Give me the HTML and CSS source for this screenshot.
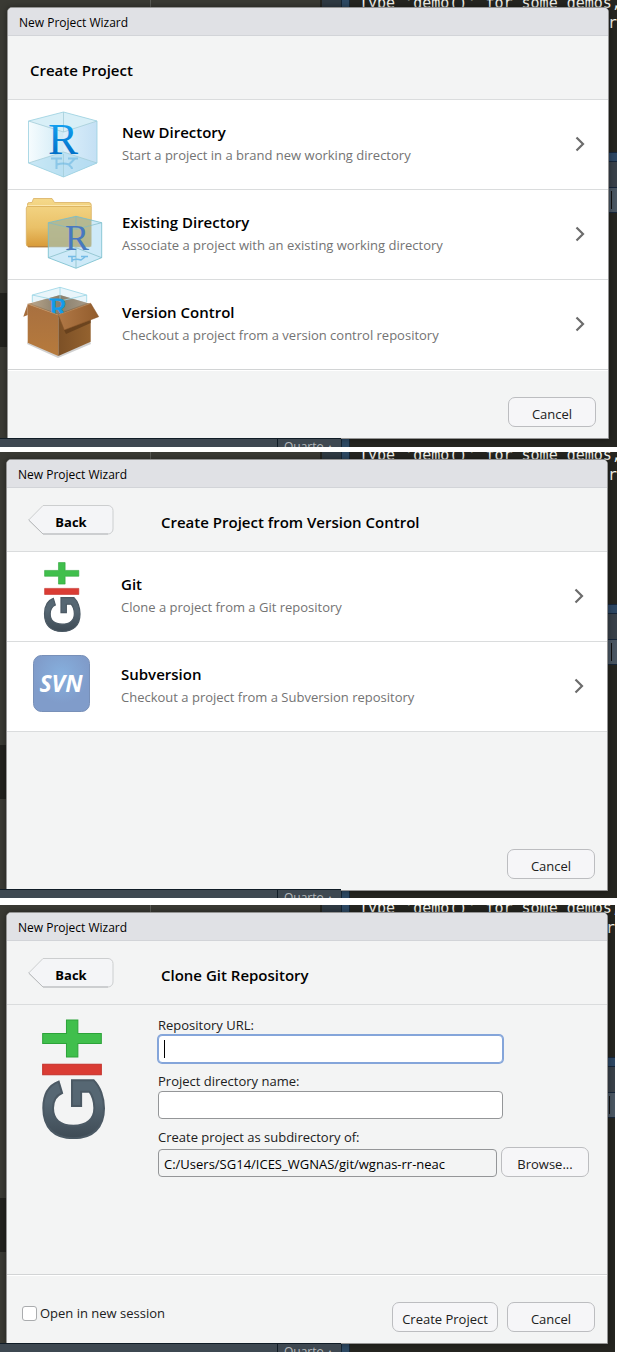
FILE: index.html
```html
<!DOCTYPE html>
<html lang="en">
<head>
<meta charset="utf-8">
<title>New Project Wizard</title>
<link rel="stylesheet" href="styles.css">
</head>
<body>
<svg class="defs" aria-hidden="true">
  <defs>
    <linearGradient id="glass" x1="0" x2="1" y1="0" y2="1">
      <stop offset="0" stop-color="#eef8fc"/><stop offset="1" stop-color="#b4dcf2"/>
    </linearGradient>
    <linearGradient id="glassLeft" x1="0" x2="1"><stop offset="0" stop-color="#f6fcfe"/><stop offset="1" stop-color="#cfeaf5"/></linearGradient>
    <linearGradient id="glassRight" x1="0" x2="1"><stop offset="0" stop-color="#dceffa"/><stop offset="1" stop-color="#c4e0f4"/></linearGradient>
    <linearGradient id="blue" x1="0" x2="0" y1="0" y2="1"><stop offset="0.2" stop-color="#14a0f0"/><stop offset="0.8" stop-color="#0070c8"/></linearGradient>
    <linearGradient id="folder" x1="0" x2="0" y1="0" y2="1"><stop offset="0" stop-color="#f5d98a"/><stop offset="0.6" stop-color="#eac168"/><stop offset="1" stop-color="#d89a38"/></linearGradient>
    <linearGradient id="cardLeft" x1="0" x2="0" y1="0" y2="1"><stop offset="0" stop-color="#a87040"/><stop offset="1" stop-color="#b67a3c"/></linearGradient>
    <linearGradient id="cardRight" x1="0" x2="1"><stop offset="0" stop-color="#7c5026"/><stop offset="1" stop-color="#94622f"/></linearGradient>
    <linearGradient id="cardFlap" x1="0" x2="1"><stop offset="0" stop-color="#b07846"/><stop offset="1" stop-color="#925c2c"/></linearGradient>
    <linearGradient id="cardInside" x1="0" x2="1"><stop offset="0" stop-color="#b89874"/><stop offset="0.5" stop-color="#75654c"/><stop offset="1" stop-color="#a08a70"/></linearGradient>
    <linearGradient id="slate" gradientUnits="userSpaceOnUse" x1="0" x2="170" y1="0" y2="0"><stop offset="0" stop-color="#3c4852"/><stop offset="0.7" stop-color="#566773"/></linearGradient>
    <radialGradient id="svnFill" cx="0.5" cy="0.35" r="0.5"><stop offset="0" stop-color="#86b0de"/><stop offset="1" stop-color="#809cca"/></radialGradient>
    <symbol id="chevron" viewBox="0 0 10 16"><path d="M1.500 1.500 8 8l-6.500 6.500" fill="none" stroke="#6c6c6c" stroke-width="2.200"/></symbol>
    <symbol id="arrowShape" viewBox="0 0 86 30">
      <path d="M15 .5H80a5 5 0 0 1 5 5V24a5 5 0 0 1-5 5H15L.7 15Z" fill="#f4f5f7" stroke="#cccecf"/>
      <path d="M.7 15 15 29H80" fill="none" stroke="#b9bbbd"/>
    </symbol>
    <symbol id="git" viewBox="120 58 194 358">
      <path d="M199 61h34v40h70v30h-70v40h-34v-40h-71v-30h71Z" fill="#40bf4c" stroke="#2ca339" stroke-width="3"/>
      <path d="M128 193h175v31H128Z" fill="#da3c34" stroke="#c32f28" stroke-width="3"/>
      <text class="git-letter" transform="translate(307 424) rotate(-90)">G</text>
    </symbol>
  </defs>
</svg>

<main class="page">
  <section class="screen screen-first">
    <div class="ide" aria-hidden="true">
      <div class="ide-left"><div class="ide-guide"></div><div class="ide-mark"></div><div class="ide-tabs"><span class="ide-tab">Quarto &#9652;</span></div></div>
      <div class="ide-gutter"></div>
      <div class="ide-split"></div>
      <div class="ide-console"><div class="ide-code">Type 'demo()' for some demos,</div><div class="ide-code ide-code-end">or</div>
        <div class="ide-dock"><div class="ide-dock-bar"></div><div class="ide-dock-tabs"></div><div class="ide-dock-tools"></div></div></div>
    </div>
    <div class="dialog">
      <div class="titlebar">New Project Wizard</div>
      <header class="header"><h2 class="heading">Create Project</h2></header>
      <div class="choices">
        <button class="choice" type="button">
          <svg class="choice-icon" viewBox="0 0 88 88" aria-hidden="true">
            <path d="M8.500 21 43.500 12 77 21V63L43.500 77 8.500 63Z" fill="url(#glass)"/>
            <path d="M8.500 21 43.500 32V77L8.500 63Z" fill="url(#glassLeft)"/>
            <path d="M77 21 43.500 32V77L77 63Z" fill="url(#glassRight)"/>
            <path d="M8.500 63 43.500 52 77 63 43.500 77Z" fill="#a5d7ee" opacity=".55"/>
            <path d="M8.500 21 43.500 12 77 21 43.500 32Z" fill="#d8eff7"/>
            <path d="M8.500 21 43.500 32 77 21M43.500 12V32M8.500 63 43.500 52 77 63M43.500 54V77" fill="none" stroke="#a5cdd8" stroke-width=".8"/>
            <path d="M8.500 21 43.500 12 77 21V63L43.500 77 8.500 63Z" fill="none" stroke="#9bd0e0" stroke-width=".8"/>
            <path d="M31 58.500h11M48 58.500h10M36.500 59v10M37 64.500q6-2 12 0l6-6M49 65q3 2 3 4" fill="none" stroke="#5aaede" stroke-width="2" opacity=".5"/>
            <text class="r-letter r-large" x="28" y="54">R</text>
          </svg>
          <span class="choice-text"><strong class="choice-title">New Directory</strong><span class="choice-note">Start a project in a brand new working directory</span></span>
          <svg class="chevron" aria-hidden="true"><use href="#chevron"/></svg>
        </button>
        <button class="choice" type="button">
          <svg class="choice-icon" viewBox="0 0 88 88" aria-hidden="true">
            <path d="M7.500 16V14q0-1.500 2-1.500h2.500l1.500-4h18.500l2.500 4H69q2.300 0 2.300 3V54q0 2.700-2.500 2.700H9Q6.300 56.700 6.300 54V18Z" fill="url(#folder)" stroke="#d9b062" stroke-width=".8"/>
            <path d="M7 17Q7 15.500 9 15.500H69.500Q71 15.500 71 17" fill="none" stroke="#fbe7ae"/>
            <path d="M7 16.500H71" stroke="#d6a954" stroke-width=".7"/>
            <path d="M8 56.800H70" stroke="#a87030"/>
            <path d="M28.300 32.700 56 26.300 81.700 32.700V67.700L56 78.300 28.300 67.700Z" fill="#bde3f6" opacity=".75"/>
            <path d="M28.300 32.700 56 26.300 71.300 30V56.700H28.300Z" fill="#a8a266" opacity=".6"/>
            <path d="M28.300 32.700 56 39.300 81.700 32.700M56 26.300V39.300M28.300 67.700 56 57.700 81.700 67.700M56 58V78" fill="none" stroke="#7fbac4" stroke-width=".7"/>
            <path d="M28.300 32.700 56 26.300 81.700 32.700V67.700L56 78.300 28.300 67.700Z" fill="none" stroke="#74bccb" stroke-width=".8"/>
            <text class="r-letter r-medium" x="45" y="60">R</text>
            <path d="M48 66.500h8M61 66.500h7M52 67v5M52 70q5-1.500 9 0l4-3" fill="none" stroke="#76bce6" stroke-width="1.500"/>
          </svg>
          <span class="choice-text"><strong class="choice-title">Existing Directory</strong><span class="choice-note">Associate a project with an existing working directory</span></span>
          <svg class="chevron" aria-hidden="true"><use href="#chevron"/></svg>
        </button>
        <button class="choice" type="button">
          <svg class="choice-icon" viewBox="0 0 88 88" aria-hidden="true">
            <path d="M7 64 38 78 71 64 70 61 38 74 8 61Z" fill="#777" opacity=".35"/>
            <path d="M7.700 24 3.300 36.700 7.700 35Z" fill="#a66d3c"/>
            <path d="M7.700 24 40 15 70.700 24 38.300 35Z" fill="url(#cardInside)"/>
            <path d="M12.300 15 40 7.300 66.700 15V23L38.300 34 12.300 24Z" fill="#d7edf6" opacity=".55"/>
            <path d="M7.700 24 40 15 70.700 24 38.300 35Z" fill="url(#cardInside)" opacity=".65"/>
            <path d="M12.300 22V15L40 7.300 66.700 15V22M12.300 15 40 21 66.700 15M40 7.300V20" fill="none" stroke="#98d4e4" stroke-width=".8"/>
            <text class="r-letter r-small" x="29" y="37">R</text>
            <path d="M7.700 24 38.300 35V76L7.700 62.700Z" fill="url(#cardLeft)"/>
            <path d="M38.300 35 70.700 24V61.700L38.300 76Z" fill="url(#cardRight)"/>
            <path d="M44 50 70.700 40V43L46 54Z" fill="#5d3918" opacity=".7"/>
            <path d="M38.300 35 70.700 23.300 78.700 36.700 44.300 50Z" fill="url(#cardFlap)" stroke="#845328" stroke-width=".5"/>
            <path d="M7.700 24 38.300 35 70.700 23.300" fill="none" stroke="#c69565" stroke-width=".7"/>
          </svg>
          <span class="choice-text"><strong class="choice-title">Version Control</strong><span class="choice-note">Checkout a project from a version control repository</span></span>
          <svg class="chevron" aria-hidden="true"><use href="#chevron"/></svg>
        </button>
      </div>
      <footer class="footer footer-ruled"><button class="btn" type="button">Cancel</button></footer>
    </div>
  </section>

  <section class="screen screen-second">
    <div class="ide" aria-hidden="true">
      <div class="ide-left"><div class="ide-guide"></div><div class="ide-mark"></div><div class="ide-tabs"><span class="ide-tab">Quarto &#9652;</span></div></div>
      <div class="ide-gutter"></div>
      <div class="ide-split"></div>
      <div class="ide-console"><div class="ide-code">Type 'demo()' for some demos,</div><div class="ide-code ide-code-end">or</div>
        <div class="ide-dock"><div class="ide-dock-bar"></div><div class="ide-dock-tabs"></div><div class="ide-dock-tools"></div></div></div>
    </div>
    <div class="dialog">
      <div class="titlebar">New Project Wizard</div>
      <header class="header header-back">
        <button class="back" type="button"><svg class="back-shape" aria-hidden="true"><use href="#arrowShape"/></svg><span class="back-label">Back</span></button>
        <h2 class="heading">Create Project from Version Control</h2>
      </header>
      <div class="choices choices-ruled">
        <button class="choice" type="button">
          <svg class="choice-icon" viewBox="0 0 88 88" aria-hidden="true"><use href="#git" x="24" y="10" width="38" height="70"/></svg>
          <span class="choice-text"><strong class="choice-title">Git</strong><span class="choice-note">Clone a project from a Git repository</span></span>
          <svg class="chevron" aria-hidden="true"><use href="#chevron"/></svg>
        </button>
        <button class="choice" type="button">
          <svg class="choice-icon" viewBox="0 0 88 88" aria-hidden="true">
            <rect x="14.500" y="13.500" width="56" height="56" rx="8" fill="url(#svnFill)" stroke="#7890b8"/>
            <text class="svn-letters" x="42" y="50">SVN</text>
          </svg>
          <span class="choice-text"><strong class="choice-title">Subversion</strong><span class="choice-note">Checkout a project from a Subversion repository</span></span>
          <svg class="chevron" aria-hidden="true"><use href="#chevron"/></svg>
        </button>
      </div>
      <footer class="footer footer-tall"><button class="btn" type="button">Cancel</button></footer>
    </div>
  </section>

  <section class="screen screen-third">
    <div class="ide" aria-hidden="true">
      <div class="ide-left"><div class="ide-guide"></div><div class="ide-mark"></div><div class="ide-tabs"><span class="ide-tab">Quarto &#9652;</span></div></div>
      <div class="ide-gutter"></div>
      <div class="ide-split"></div>
      <div class="ide-console"><div class="ide-code">Type 'demo()' for some demos,</div><div class="ide-code ide-code-end">or</div>
        <div class="ide-dock"><div class="ide-dock-bar"></div><div class="ide-dock-tabs"></div><div class="ide-dock-tools"></div></div></div>
    </div>
    <form class="dialog">
      <div class="titlebar">New Project Wizard</div>
      <header class="header header-back">
        <button class="back" type="button"><svg class="back-shape" aria-hidden="true"><use href="#arrowShape"/></svg><span class="back-label">Back</span></button>
        <h2 class="heading">Clone Git Repository</h2>
      </header>
      <div class="details">
        <svg class="git-large" aria-hidden="true"><use href="#git"/></svg>
        <div class="fields">
          <div class="field"><label class="label" for="url">Repository URL:</label><input class="input" id="url" type="text" autofocus></div>
          <div class="field"><label class="label" for="name">Project directory name:</label><input class="input" id="name" type="text"></div>
          <div class="field"><label class="label" for="parent">Create project as subdirectory of:</label>
            <div class="picker"><input class="input input-path" id="parent" type="text" readonly value="C:/Users/SG14/ICES_WGNAS/git/wgnas-rr-neac"><button class="btn" type="button">Browse...</button></div></div>
        </div>
      </div>
      <footer class="footer footer-ruled">
        <label class="check"><input class="checkbox" type="checkbox">Open in new session</label>
        <button class="btn btn-wide" type="submit">Create Project</button>
        <button class="btn" type="button">Cancel</button>
      </footer>
    </form>
  </section>
</main>
</body>
</html>
```
FILE: styles.css
```css
* { box-sizing: border-box; }
body { margin: 0; background: #fff; color: #000; font: 13px/18px "Open Sans", "Noto Sans", sans-serif; }
button, input { font: inherit; color: inherit; }
.defs { position: absolute; width: 0; height: 0; }
.page { padding: 0 5px 4px 0; }

.screen { position: relative; overflow: hidden; }
.screen-first { padding: 7px 8px 8px 7px; }
.screen-second { padding: 7px 9px 7px 6px; margin-top: 5px; }
.screen-third { padding: 7px 7px 8px 6px; margin: 7px 2px 0 0; }

/* Editor window that shows round the edges of each dialog */
.ide { position: absolute; inset: 0; display: flex; background: #252520; overflow: hidden; }
.ide-left { position: relative; flex: none; width: 322px; background: #3a3a34; border-right: 2px solid #252520; }
.ide-guide { width: 151px; height: 12px; border-right: 1px solid #5a5b56; }
.ide-mark { position: absolute; top: 293px; left: 0; width: 12px; height: 54px; background: #22221e; }
.ide-tabs { position: absolute; bottom: 0; left: 0; width: 341px; height: 9px; background: #3e4851; border-top: 1px solid #101c26; padding-left: 277px; overflow: hidden; z-index: 1; }
.ide-tab { display: block; border-left: 1px solid #101c26; padding-left: 6px; color: #b4b8bb; font-size: 12px; line-height: 16px; }
.ide-gutter { flex: none; width: 19px; background: #2f3a43; }
.ide-split { flex: none; width: 9px; background: #2d4963; border: solid #152635; border-width: 0 1px; }
.ide-console { position: relative; flex: 1; min-width: 0; padding-left: 9px; margin-top: -7px; color: #f4f4ee; }
.ide-code { font: 15px/20px "DejaVu Sans Mono", monospace; white-space: pre; }
.ide-code-end { text-align: right; }
.ide-dock { position: absolute; top: 159px; right: 0; width: 12px; }
.ide-dock-bar { height: 10px; background: #2d4763; border: solid #16263a; border-width: 1px 0; }
.ide-dock-tabs { height: 26px; background: #394149; border-bottom: 1px solid #16263a; }
.ide-dock-tools { height: 25px; padding-top: 3px; background: #4a5662; border-bottom: 1px solid #16263a; }
.ide-dock-tools::before { content: ""; display: block; width: 1px; height: 18px; margin-left: 6px; background: #111; }

.dialog { position: relative; display: flex; flex-direction: column; background: #f3f4f4; border: 1px solid #949494; border-radius: 5px 5px 0 0; box-shadow: 0 0 6px rgba(0, 0, 0, .4); overflow: hidden; }
.titlebar { height: 28px; padding: 6px 11px 0; background: #e0e1e5; border-bottom: 1px solid #d2d4d8; font-size: 12px; line-height: 18px; }
.header { display: flex; align-items: center; height: 64px; padding: 0 22px; border-bottom: 1px solid #dadcdd; }
.header-back { padding-left: 21px; gap: 47px; }
.heading { margin: 0; padding-top: 4px; font-size: 15px; font-weight: 600; line-height: 20px; }

.back { position: relative; width: 86px; height: 30px; padding: 4px 0 0; border: 0; background: none; font-size: 13px; font-weight: 700; }
.back-shape { position: absolute; inset: 0; width: 86px; height: 30px; }
.back-label { position: relative; }

.choices { display: flex; flex-direction: column; background: #fff; }
.choices-ruled { border-bottom: 1px solid #dadcdd; }
.choice { display: flex; align-items: center; height: 90px; padding: 0 23px 2px 12px; border: 0; border-bottom: 1px solid #dadcdd; background: #fff; text-align: left; }
.choice:last-child { height: 89px; border-bottom: 0; }
.choice-icon { flex: none; width: 88px; height: 88px; margin-right: 14px; }
.choice-text { display: flex; flex: 1; flex-direction: column; gap: 4px; padding-bottom: 2px; }
.choice-title { font-size: 15px; font-weight: 600; line-height: 20px; }
.choice-note { color: #737373; }
.chevron { width: 10px; height: 16px; }

.r-letter { font-family: "Liberation Serif", serif; }
.r-large { font-size: 45px; fill: url(#blue); }
.r-medium { font-size: 36px; fill: #4878c0; }
.r-small { font-size: 28px; fill: #129bea; stroke: #129bea; stroke-width: 1px; }
.git-letter { font: 700 256px "Liberation Sans", sans-serif; fill: url(#slate); stroke: #4b5964; stroke-width: 6px; }
.svn-letters { font: italic 700 23px "Open Sans", sans-serif; fill: #fff; text-anchor: middle; }

.details { display: flex; min-height: 269px; padding: 10px 18px 0 33px; }
.git-large { flex: none; width: 65px; height: 120px; margin: 4px 53px 0 0; }
.fields { display: flex; flex: 1; flex-direction: column; gap: 8px; }
.field { display: flex; flex-direction: column; }
.label { line-height: 20px; color: #202020; }
.input { width: 80%; height: 28px; padding: 0 6px; border: 1px solid #949698; border-radius: 4px; background: #fff; outline: 0; }
.input:focus { border-color: #84a5da; box-shadow: 0 0 0 1px #84a5da; background: #fff linear-gradient(#000, #000) 5px center / 1px 18px no-repeat; caret-color: transparent; }
.picker { display: flex; align-items: flex-end; gap: 4px; }
.input-path { flex: 1; min-width: 0; width: auto; padding: 2px 5px 0; background: #f3f4f4; }

.footer { display: flex; align-items: flex-end; justify-content: flex-end; gap: 9px; height: 68px; padding: 0 12px 11px 15px; }
.footer-ruled { height: 69px; border-top: 1px solid #d2d4d5; box-shadow: inset 0 1px 0 #fff; }
.footer-tall { height: 158px; }
.btn { flex: none; width: 88px; height: 30px; padding: 4px 0 0; border: 1px solid #bcbdc0; border-radius: 7px; background: #f6f6f8; color: #202020; }
.btn-wide { width: 106px; }
.check { display: flex; align-items: center; gap: 3px; margin-right: auto; padding-bottom: 10px; color: #202020; }
.checkbox { appearance: none; width: 15px; height: 15px; margin: 0; border: 1px solid #aaacae; border-radius: 3px; background: #fff; }
```
